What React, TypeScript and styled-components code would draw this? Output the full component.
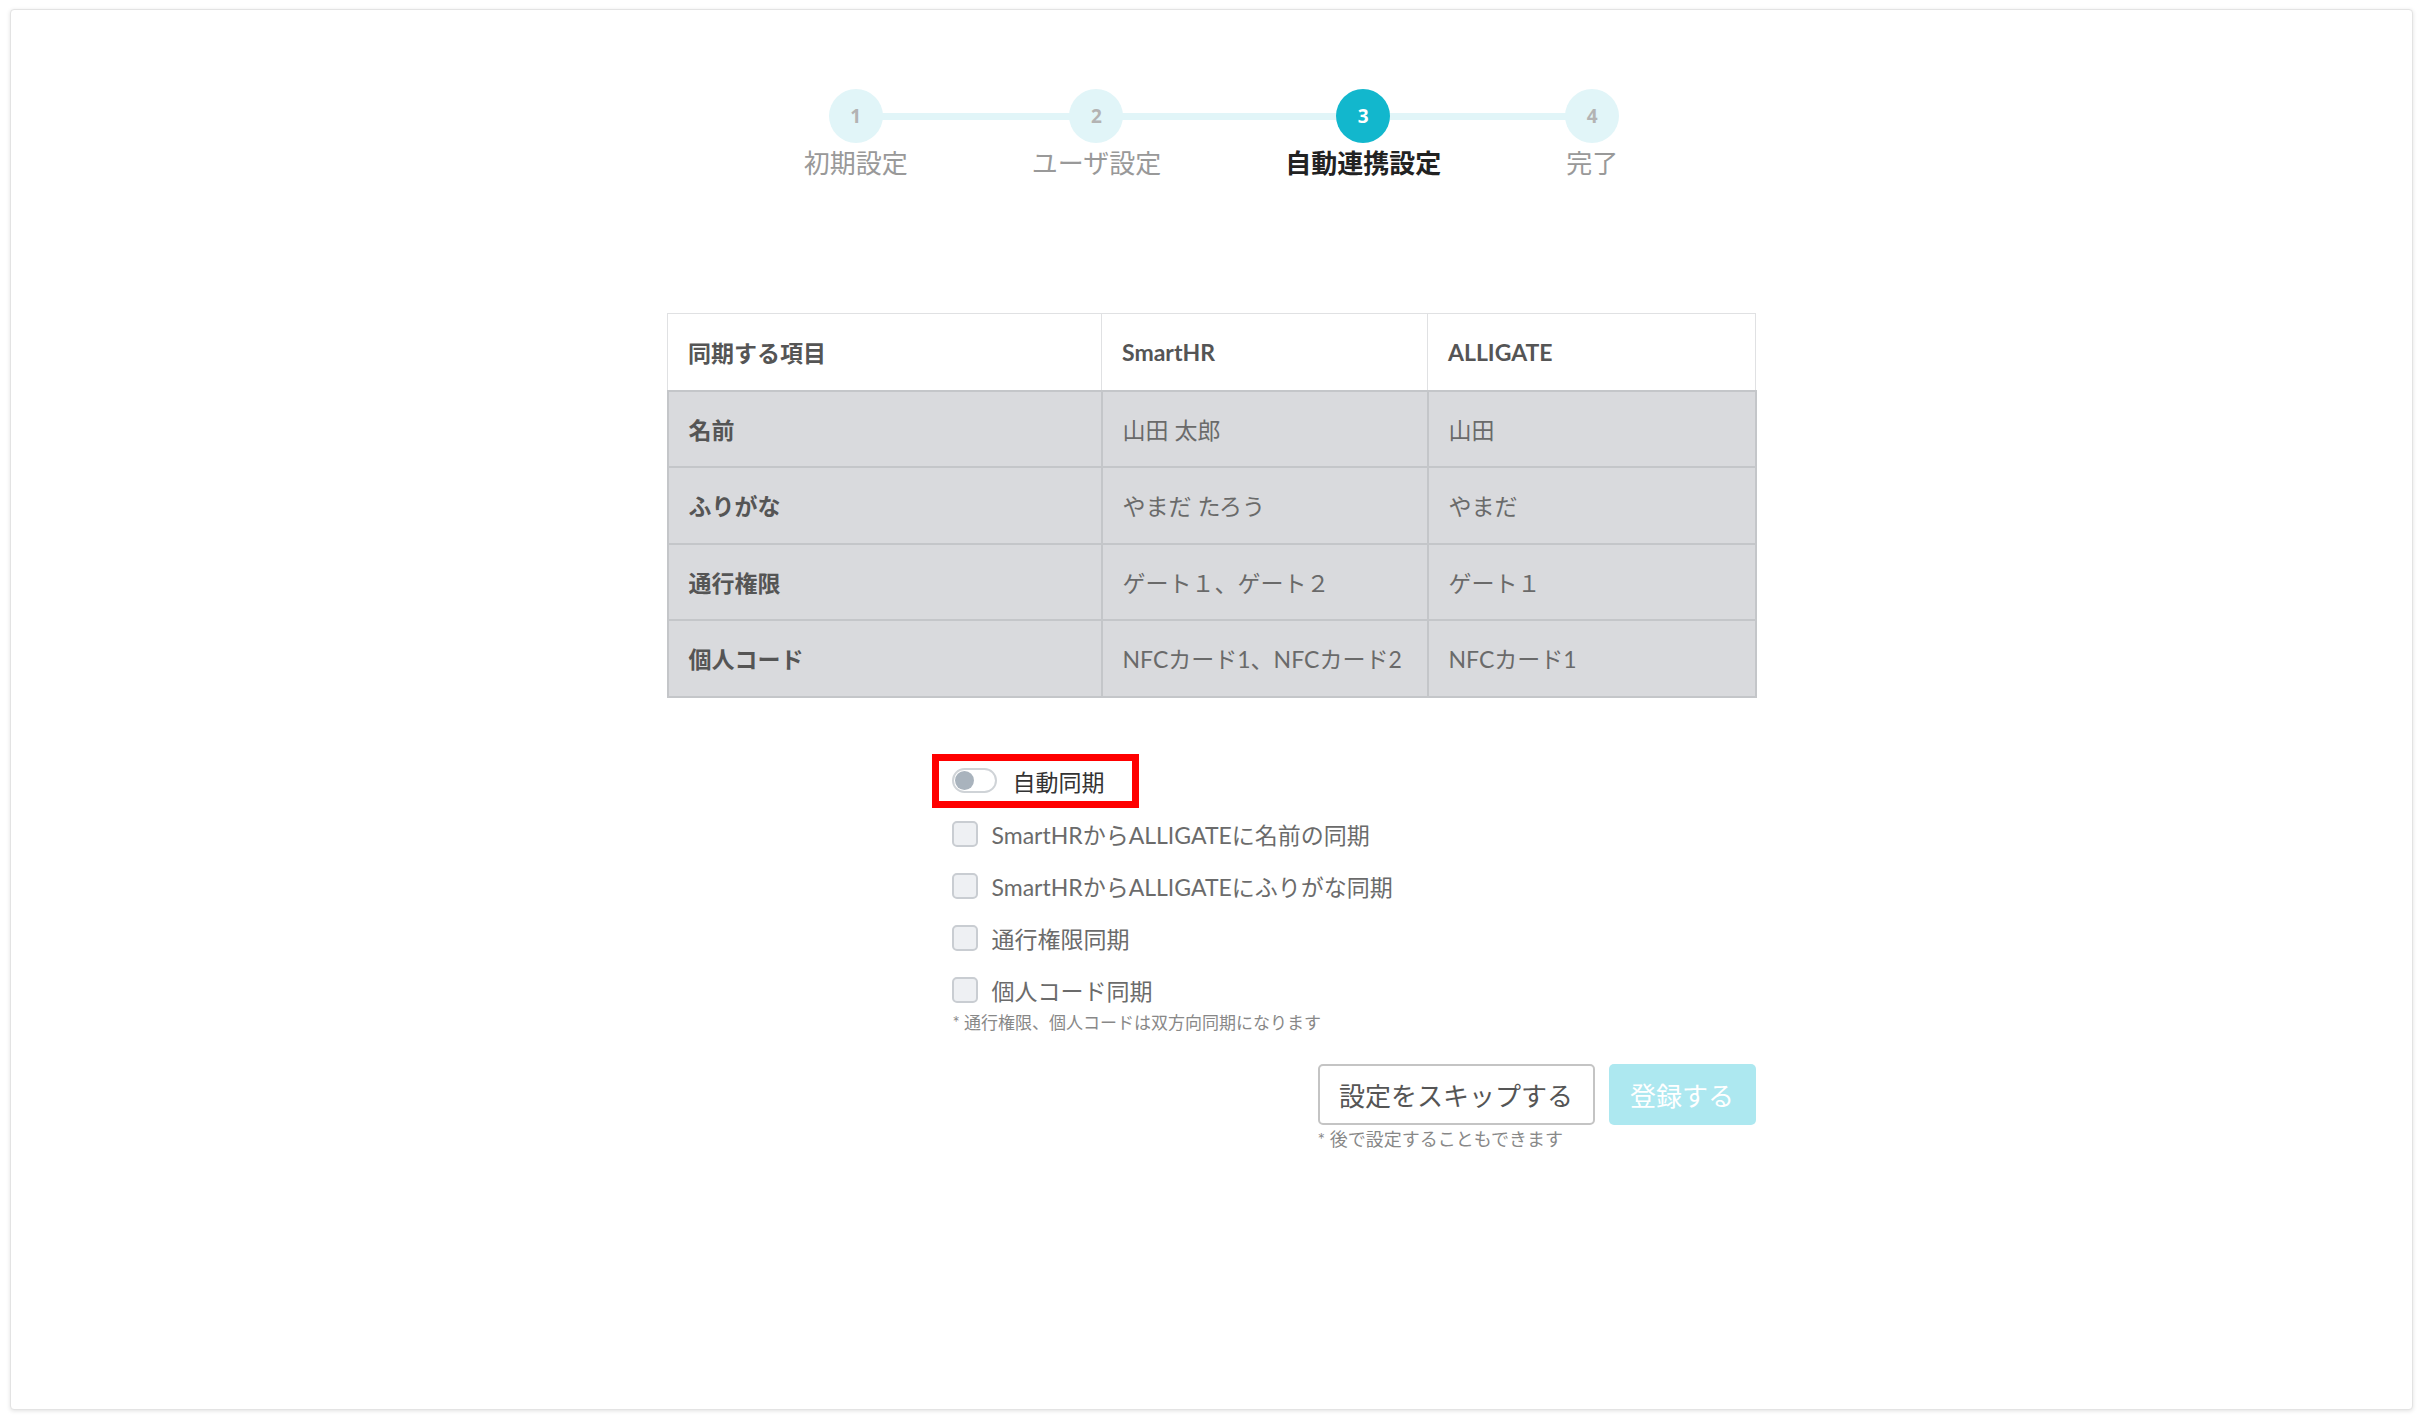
import React from "react";
import styled, { createGlobalStyle, css } from "styled-components";

const GlobalStyle = createGlobalStyle`
  html, body {
    margin: 0;
    padding: 0;
    background: #ffffff;
  }
  body {
    font-family: "Lato", "Noto Sans CJK JP", "Noto Sans", sans-serif;
    color: #555;
  }
  * { box-sizing: border-box; }
`;

const Page = styled.div`
  padding: 9px 14px 13px 10px;
`;

const Card = styled.div`
  height: 1401px;
  border: 1px solid #e3e3e3;
  border-radius: 4px;
  box-shadow: 0 1px 4px rgba(0, 0, 0, 0.12);
  background: #fff;
  padding-top: 79px;
  display: flex;
  flex-direction: column;
  align-items: center;
`;

const Stepper = styled.ol`
  list-style: none;
  margin: 0;
  padding: 0;
  display: flex;
  gap: 124px;
`;

const Step = styled.li<{ $first?: boolean; $last?: boolean }>`
  position: relative;
  display: flex;
  flex-direction: column;
  align-items: center;

  &::before,
  &::after {
    content: "";
    position: absolute;
    top: 24px;
    height: 7px;
    background: #e1f5f8;
    z-index: 0;
  }
  &::before {
    left: -62px;
    right: 50%;
    ${(p) => p.$first && css`display: none;`}
  }
  &::after {
    left: 50%;
    right: -62px;
    ${(p) => p.$last && css`display: none;`}
  }
`;

const StepCircle = styled.span<{ $active?: boolean }>`
  position: relative;
  z-index: 1;
  width: 54px;
  height: 54px;
  border-radius: 50%;
  display: flex;
  align-items: center;
  justify-content: center;
  font-family: "Open Sans", "Lato", sans-serif;
  font-weight: 700;
  font-size: 19px;
  background: ${(p) => (p.$active ? "#12b7cd" : "#e1f5f8")};
  color: ${(p) => (p.$active ? "#ffffff" : "#b3b3b3")};
`;

const StepLabel = styled.span<{ $active?: boolean }>`
  margin-top: 5px;
  font-size: 26px;
  line-height: 30px;
  white-space: nowrap;
  font-weight: ${(p) => (p.$active ? 700 : 400)};
  color: ${(p) => (p.$active ? "#222" : "#999")};
`;

const SyncTable = styled.table`
  margin-top: 135px;
  width: 1088px;
  border-collapse: collapse;
  table-layout: fixed;
  font-size: 23px;
`;

const HeadCell = styled.th`
  height: 77px;
  padding: 0 0 0 20px;
  text-align: left;
  font-weight: 700;
  color: #555;
  background: #fff;
  border: 1px solid #e0e1e3;
  border-bottom: none;
`;

const BodyRow = styled.tr`
  background: #d9dadd;
`;

const BodyCell = styled.td<{ $key?: boolean }>`
  height: 76.5px;
  padding: 0 0 0 20px;
  border: 2px solid #c4c6c9;
  color: ${(p) => (p.$key ? "#555" : "#6a6a6a")};
  font-weight: ${(p) => (p.$key ? 700 : 400)};
  white-space: nowrap;
`;

const Options = styled.div`
  margin-top: 56px;
  width: 560px;
  display: flex;
  flex-direction: column;
  align-items: flex-start;
`;

const ToggleRow = styled.label`
  display: inline-flex;
  align-items: center;
  gap: 16px;
  height: 54px;
  border: 7px solid #ff0000;
  padding: 0 27px 0 13px;
  font-size: 23px;
  color: #333;
`;

const Toggle = styled.span`
  position: relative;
  width: 45px;
  height: 25px;
  border-radius: 13px;
  border: 2px solid #cfd3d7;
  background: #fff;

  &::after {
    content: "";
    position: absolute;
    top: 1px;
    left: 1px;
    width: 19px;
    height: 19px;
    border-radius: 50%;
    background: #a9b3bd;
  }
`;

const CheckRow = styled.label`
  display: flex;
  align-items: center;
  gap: 14px;
  height: 52px;
  padding-left: 20px;
  font-size: 23px;
  color: #6b6b6b;
  white-space: nowrap;
`;

const CheckBox = styled.span`
  width: 26px;
  height: 26px;
  border-radius: 5px;
  border: 2px solid #c9cdd2;
  background: #eef0f3;
  flex: none;
`;

const OptionNote = styled.p`
  margin: 0;
  padding-left: 21px;
  font-size: 17px;
  line-height: 14px;
  color: #888;
`;

const Actions = styled.div`
  margin-top: 34px;
  width: 1088px;
  display: flex;
  justify-content: flex-end;
  align-items: flex-start;
  gap: 14px;
`;

const SkipGroup = styled.div`
  display: flex;
  flex-direction: column;
  align-items: flex-start;
`;

const Button = styled.button<{ $primary?: boolean }>`
  height: 61px;
  border-radius: 5px;
  font-family: "Lato", "Noto Sans CJK JP", sans-serif;
  font-size: 26px;
  padding: 0;
  cursor: pointer;
  ${(p) =>
    p.$primary
      ? css`
          width: 147px;
          border: none;
          background: #ade8f0;
          color: #ffffff;
        `
      : css`
          width: 277px;
          border: 2px solid #c4c4c4;
          background: #ffffff;
          color: #555;
        `}
`;

const ActionNote = styled.span`
  margin-top: 3px;
  font-size: 18px;
  line-height: 22px;
  color: #888;
`;

const steps = ["初期設定", "ユーザ設定", "自動連携設定", "完了"];
const activeStep = 2;

const rows: [string, string, string][] = [
  ["名前", "山田 太郎", "山田"],
  ["ふりがな", "やまだ たろう", "やまだ"],
  ["通行権限", "ゲート１、ゲート２", "ゲート１"],
  ["個人コード", "NFCカード1、NFCカード2", "NFCカード1"],
];

const options = [
  "SmartHRからALLIGATEに名前の同期",
  "SmartHRからALLIGATEにふりがな同期",
  "通行権限同期",
  "個人コード同期",
];

export default function App() {
  return (
    <>
      <GlobalStyle />
      <Page>
        <Card>
          <Stepper>
            {steps.map((s, i) => (
              <Step key={s} $first={i === 0} $last={i === steps.length - 1}>
                <StepCircle $active={i === activeStep}>{i + 1}</StepCircle>
                <StepLabel $active={i === activeStep}>{s}</StepLabel>
              </Step>
            ))}
          </Stepper>

          <SyncTable>
            <colgroup>
              <col style={{ width: 434 }} />
              <col style={{ width: 326 }} />
              <col style={{ width: 328 }} />
            </colgroup>
            <thead>
              <tr>
                <HeadCell>同期する項目</HeadCell>
                <HeadCell>SmartHR</HeadCell>
                <HeadCell>ALLIGATE</HeadCell>
              </tr>
            </thead>
            <tbody>
              {rows.map((r) => (
                <BodyRow key={r[0]}>
                  <BodyCell $key>{r[0]}</BodyCell>
                  <BodyCell>{r[1]}</BodyCell>
                  <BodyCell>{r[2]}</BodyCell>
                </BodyRow>
              ))}
            </tbody>
          </SyncTable>

          <Options>
            <ToggleRow>
              <Toggle />
              自動同期
            </ToggleRow>
            {options.map((o) => (
              <CheckRow key={o}>
                <CheckBox />
                {o}
              </CheckRow>
            ))}
            <OptionNote>* 通行権限、個人コードは双方向同期になります</OptionNote>
          </Options>

          <Actions>
            <SkipGroup>
              <Button>設定をスキップする</Button>
              <ActionNote>* 後で設定することもできます</ActionNote>
            </SkipGroup>
            <Button $primary>登録する</Button>
          </Actions>
        </Card>
      </Page>
    </>
  );
}
